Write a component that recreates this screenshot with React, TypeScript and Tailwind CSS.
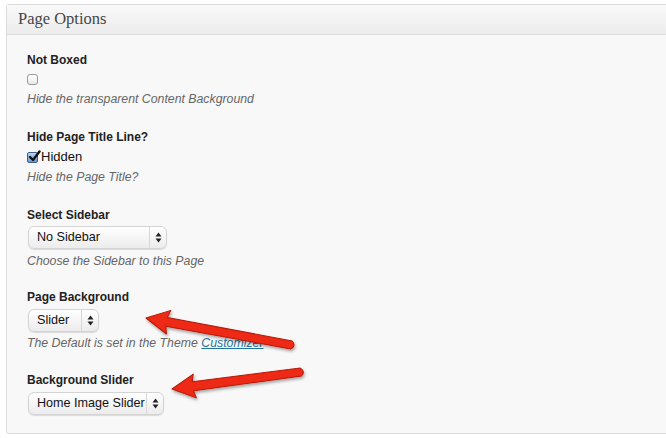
import React from "react";

function Updown() {
  return (
    <svg width="7" height="11" viewBox="0 0 7 11" className="block">
      <path d="M3.5 0.5 L6.5 4.5 L0.5 4.5 Z" fill="#222" />
      <path d="M3.5 10.5 L6.5 6.5 L0.5 6.5 Z" fill="#222" />
    </svg>
  );
}

function Select({ label, w }: { label: string; w: string }) {
  return (
    <div
      className={`flex h-[23px] ${w} items-stretch rounded-[6px] border border-[#d4d4d4] bg-gradient-to-b from-[#ffffff] to-[#ececec] shadow-[0_1px_1px_rgba(0,0,0,0.12)]`}
    >
      <div className="flex flex-1 items-center whitespace-nowrap pl-[8px] text-[12.6px] text-[#111]">{label}</div>
      <div className="flex w-[17px] shrink-0 items-center justify-center border-l border-[#d8d8d8]">
        <Updown />
      </div>
    </div>
  );
}

function Label({ children }: { children: React.ReactNode }) {
  return <div className="h-[18px] text-[12px] font-bold leading-[18px] text-[#222]">{children}</div>;
}

function Desc({ children }: { children: React.ReactNode }) {
  return <div className="h-[18px] whitespace-nowrap text-[12.3px] italic leading-[18px] text-[#666]">{children}</div>;
}

export default function App() {
  return (
    <div
      className="relative h-[438px] w-[666px] overflow-hidden bg-white"
      style={{ fontFamily: '"Liberation Sans", Arial, sans-serif' }}
    >
      <div className="ml-[6px] mt-[4px] w-[680px] rounded-tl-[3px] rounded-bl-[3px] border border-[#dcdcdc] bg-[#f8f8f8]">
        <div
          className="flex h-[30px] items-center border-b border-[#dcdcdc] bg-gradient-to-b from-[#f9f9f9] to-[#ececec] pl-[11px] text-[16.5px] text-[#464646]"
          style={{ fontFamily: '"Liberation Serif", Georgia, serif' }}
        >
          Page Options
        </div>
        <div className="pl-[20px] pt-[16px] pb-[18px]">
          <Label>Not Boxed</Label>
          <div className="flex h-[21px] items-center">
            <div className="h-[11px] w-[11px] rounded-[3px] border border-[#9a9a9a] bg-gradient-to-b from-white to-[#e8e8e8]" />
          </div>
          <Desc>Hide the transparent Content Background</Desc>

          <div className="h-[20px]" />
          <Label>Hide Page Title Line?</Label>
          <div className="flex h-[22px] items-center gap-[3px] text-[13px] text-[#111]">
            <div className="relative h-[11px] w-[11px] rounded-[2px] border border-[#3b5f8f] bg-gradient-to-b from-[#b9d3f2] to-[#6a97d4]">
              <svg width="13" height="13" viewBox="0 0 13 13" className="absolute -top-[3px] left-[0px]">
                <path d="M2 7 L5 10 L11.5 1.5" stroke="#111" strokeWidth="2.4" fill="none" strokeLinecap="round" strokeLinejoin="round" />
              </svg>
            </div>
            <span>Hidden</span>
          </div>
          <Desc>Hide the Page Title?</Desc>

          <div className="h-[20px]" />
          <Label>Select Sidebar</Label>
          <div className="pt-[2px] pb-[3px] pl-[1px]">
            <Select label="No Sidebar" w="w-[139px]" />
          </div>
          <Desc>Choose the Sidebar to this Page</Desc>

          <div className="h-[18px]" />
          <Label>Page Background</Label>
          <div className="pt-[3px] pb-[2px] pl-[1px]">
            <Select label="Slider" w="w-[71px]" />
          </div>
          <Desc>
            The Default is set in the Theme <span className="text-[#21759b] underline">Customizer</span>
          </Desc>

          <div className="h-[19px]" />
          <Label>Background Slider</Label>
          <div className="pt-[3px] pl-[1px]">
            <Select label="Home Image Slider" w="w-[136px]" />
          </div>
        </div>
      </div>

      <svg className="pointer-events-none absolute left-0 top-0" width="666" height="438" viewBox="0 0 666 438">
        <defs>
          <filter id="sh" x="-20%" y="-50%" width="140%" height="200%">
            <feDropShadow dx="1" dy="2" stdDeviation="1.5" floodColor="#000" floodOpacity="0.35" />
          </filter>
        </defs>
        <g filter="url(#sh)">
          <g transform="translate(146 318) rotate(10.5)">
            <path
              d="M0 0 L23 -12 L21 -4.5 L148 -4 Q153 0 148 4 L21 4.5 L23 12 Z"
              fill="#ee2a12"
              stroke="#b51a08"
              strokeWidth="1"
              strokeLinejoin="round"
            />
          </g>
          <g transform="translate(172 389) rotate(-7.5)">
            <path
              d="M0 0 L23 -12 L21 -4.5 L130 -4 Q135 0 130 4 L21 4.5 L23 12 Z"
              fill="#ee2a12"
              stroke="#b51a08"
              strokeWidth="1"
              strokeLinejoin="round"
            />
          </g>
        </g>
      </svg>
    </div>
  );
}
